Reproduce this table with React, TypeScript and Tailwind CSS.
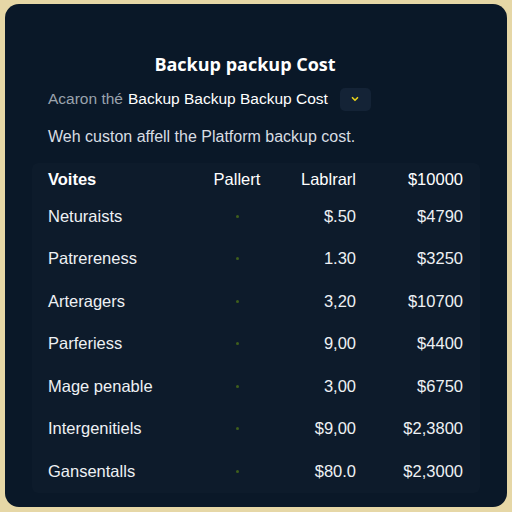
import { ChevronDown } from "lucide-react";

const rows = [
  { name: "Neturaists", rate: "$.50", total: "$4790" },
  { name: "Patrereness", rate: "1.30", total: "$3250" },
  { name: "Arteragers", rate: "3,20", total: "$10700" },
  { name: "Parferiess", rate: "9,00", total: "$4400" },
  { name: "Mage penable", rate: "3,00", total: "$6750" },
  { name: "Intergenitiels", rate: "$9,00", total: "$2,3800" },
  { name: "Gansentalls", rate: "$80.0", total: "$2,3000" },
];

export default function App() {
  return (
    <div className="w-[512px] h-[512px] bg-[#e6d7a6] pt-[4px] px-[5px]" style={{ fontFamily: "'Liberation Sans', Arial, sans-serif" }}>
      <div className="h-[503px] rounded-[14px] bg-[#0a1828] text-white flex flex-col">
        {/* Header */}
        <h1 className="mt-[46px] pr-[22px] text-center text-[18px] font-bold leading-[28px]" style={{ fontFamily: "'Open Sans', sans-serif" }}>Backup packup Cost</h1>

        <div className="mt-[9px] ml-[43px] flex items-center h-[24px] text-[15.5px]">
          <span className="text-[#9aa3ad]">Acaron thé</span>
          <span className="ml-[5px] text-white">Backup Backup Backup Cost</span>
          <button className="ml-[12px] w-[31px] h-[23px] rounded-[5px] bg-[#142336] flex items-center justify-center">
            <ChevronDown className="w-[10px] h-[10px] text-[#e8d21a]" strokeWidth={4} />
          </button>
        </div>

        <p className="mt-[14px] ml-[43px] text-[16px] leading-[24px] text-[#d8dde3]">Weh custon affell the Platform backup cost.</p>

        {/* Table */}
        <div className="mt-[14px] mx-[27px] rounded-[6px] bg-white/[0.015] text-[16.5px]">
          <div className="grid grid-cols-[152px_74px_82px_107px] h-[32px] items-center px-[16px]">
            <span className="font-bold">Voites</span>
            <span className="text-center">Pallert</span>
            <span className="text-right">Lablrarl</span>
            <span className="text-right">$10000</span>
          </div>
          {rows.map((r) => (
            <div key={r.name} className="grid grid-cols-[152px_74px_82px_107px] h-[42.5px] items-center px-[16px]">
              <span className="text-[#eef1f4]">{r.name}</span>
              <span className="flex justify-center">
                <span className="w-[3px] h-[3px] rounded-full bg-[#3f5f1c]"></span>
              </span>
              <span className="text-right text-[#eef1f4]">{r.rate}</span>
              <span className="text-right text-[#eef1f4]">{r.total}</span>
            </div>
          ))}
        </div>
      </div>
    </div>
  );
}
